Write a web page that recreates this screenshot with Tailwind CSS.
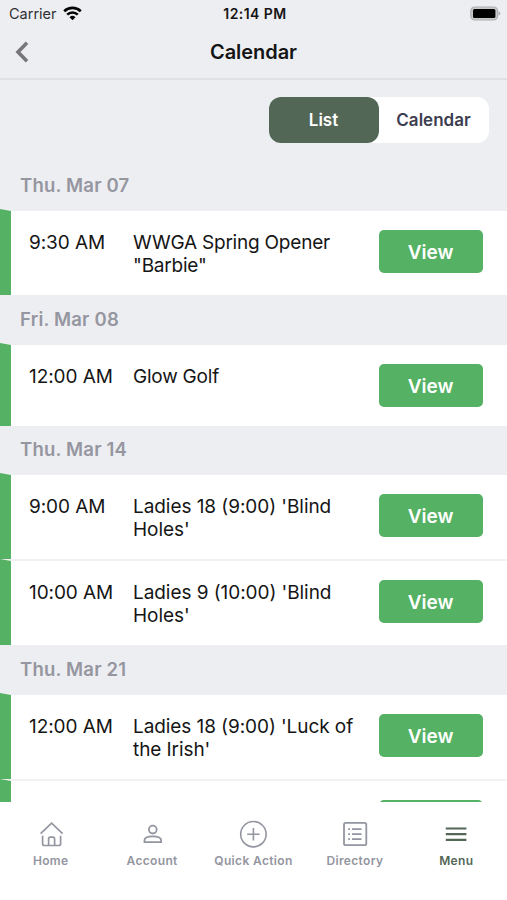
<!DOCTYPE html>
<html lang="en">
<head>
<meta charset="utf-8">
<title>Calendar</title>
<script src="https://cdn.jsdelivr.net/npm/@tailwindcss/browser@4"></script>
</head>
<body class="w-[507px] h-[900px] overflow-hidden bg-white text-[#151515] font-['Inter','Liberation_Sans',sans-serif]">
<div class="flex flex-col h-[900px]">
  <header class="h-20 shrink-0 bg-[#edeef2] border-b-2 border-[#e0e1e4]">
    <div class="grid grid-cols-3 h-7 items-center pl-[9px] pr-[6px]">
      <div class="flex items-center gap-[6px]"><span class="text-[14.5px] leading-7 text-[#303032]">Carrier</span>
        <svg class="w-[19px] h-[15px] -mt-[2px]" viewBox="0 0 19 15" fill="none" stroke="#050505" stroke-width="2.6"><path d="M1.2 5.2a12 12 0 0 1 16.6 0M4.2 8.7a7.5 7.5 0 0 1 10.6 0"/><path d="M9.5 14.2 6.5 11.2a4.4 4.4 0 0 1 6 0Z" fill="#050505" stroke="none"/></svg></div>
      <span class="text-center text-[14px] leading-7 font-semibold whitespace-nowrap tracking-[0.45px]">12:14 PM</span>
      <svg class="w-[31px] h-[15px] -mt-[2px] justify-self-end" viewBox="0 0 31 15"><rect x=".8" y="1" width="26.8" height="13" rx="4" fill="#c9c9cb" stroke="#b0b0b2" stroke-width="1.2"/><rect x="3" y="3" width="22.4" height="9" rx="1.5" fill="#000"/><path d="M28.6 5.3q3.4 2.2 0 4.4Z" fill="#aaaaac"/></svg>
    </div>
    <div class="grid grid-cols-3 h-[48px] items-center">
      <svg class="ml-[15px] w-[14px] h-[22px]" viewBox="0 0 14 22" fill="none" stroke="#77777a" stroke-width="3.6"><path d="M12 1.8 3 11l9 9.2"/></svg>
      <h1 class="text-center text-[20px] font-semibold leading-6 tracking-[-0.05px]">Calendar</h1>
    </div>
  </header>

  <main class="h-[722px] shrink-0 overflow-hidden bg-[#edeef2]">
    <div class="flex justify-end pt-[17px] pr-[18.5px]">
      <div class="flex h-[46px] w-[220px] rounded-[12px] bg-white text-[17px] font-semibold">
        <button class="w-[110px] rounded-[12px] bg-[#536757] pt-[2px] text-white">List</button>
        <button class="w-[110px] pt-[2px] text-[#3d3d50]">Calendar</button>
      </div>
    </div>

    <h2 class="h-[66px] pt-[30px] pl-5 text-[18.5px] leading-6 font-semibold tracking-[0.2px] text-[#9596a0]">Thu. Mar 07</h2>
    <article class="flex h-[86px] border-t-2 border-t-[#edeef2] border-l-[11px] border-l-[#55b163] bg-white pl-[18px] pt-[19px] text-[19px] leading-[23px]">
      <time class="w-[104px] shrink-0 whitespace-nowrap pt-px tracking-[-0.08px]">9:30 AM</time>
      <p class="w-[245.5px] shrink-0 whitespace-nowrap pt-px tracking-[-0.22px]">WWGA Spring Opener<br>"Barbie"</p>
      <button class="h-[43px] w-[104px] shrink-0 rounded-[5px] bg-[#55b163] pt-px text-[19px] font-semibold text-white">View</button>
    </article>

    <h2 class="h-[48px] pt-3 pl-5 text-[18.5px] leading-6 font-semibold tracking-[0.2px] text-[#9596a0]">Fri. Mar 08</h2>
    <article class="flex h-[83px] border-t-2 border-t-[#edeef2] border-l-[11px] border-l-[#55b163] bg-white pl-[18px] pt-[19px] text-[19px] leading-[23px]">
      <time class="w-[104px] shrink-0 whitespace-nowrap pt-px tracking-[-0.08px]">12:00 AM</time>
      <p class="w-[245.5px] shrink-0 whitespace-nowrap pt-px tracking-[-0.22px]">Glow Golf</p>
      <button class="h-[43px] w-[104px] shrink-0 rounded-[5px] bg-[#55b163] pt-px text-[19px] font-semibold text-white">View</button>
    </article>

    <h2 class="h-[47px] pt-[11px] pl-5 text-[18.5px] leading-6 font-semibold tracking-[0.2px] text-[#9596a0]">Thu. Mar 14</h2>
    <article class="flex h-[86px] border-t-2 border-t-[#edeef2] border-l-[11px] border-l-[#55b163] bg-white pl-[18px] pt-[19px] text-[19px] leading-[23px]">
      <time class="w-[104px] shrink-0 whitespace-nowrap pt-px tracking-[-0.08px]">9:00 AM</time>
      <p class="w-[245.5px] shrink-0 whitespace-nowrap pt-px tracking-[-0.06px]">Ladies 18 (9:00) 'Blind<br>Holes'</p>
      <button class="h-[43px] w-[104px] shrink-0 rounded-[5px] bg-[#55b163] pt-px text-[19px] font-semibold text-white">View</button>
    </article>
    <article class="flex h-[86px] border-t-2 border-t-[#f2f2f3] border-l-[11px] border-l-[#55b163] bg-white pl-[18px] pt-[19px] text-[19px] leading-[23px]">
      <time class="w-[104px] shrink-0 whitespace-nowrap pt-px tracking-[-0.08px]">10:00 AM</time>
      <p class="w-[245.5px] shrink-0 whitespace-nowrap pt-px tracking-[-0.06px]">Ladies 9 (10:00) 'Blind<br>Holes'</p>
      <button class="h-[43px] w-[104px] shrink-0 rounded-[5px] bg-[#55b163] pt-px text-[19px] font-semibold text-white">View</button>
    </article>

    <h2 class="h-[48px] pt-3 pl-5 text-[18.5px] leading-6 font-semibold tracking-[0.2px] text-[#9596a0]">Thu. Mar 21</h2>
    <article class="flex h-[86px] border-t-2 border-t-[#edeef2] border-l-[11px] border-l-[#55b163] bg-white pl-[18px] pt-[19px] text-[19px] leading-[23px]">
      <time class="w-[104px] shrink-0 whitespace-nowrap pt-px tracking-[-0.08px]">12:00 AM</time>
      <p class="w-[245.5px] shrink-0 whitespace-nowrap pt-px tracking-[-0.08px]">Ladies 18 (9:00) 'Luck of<br>the Irish'</p>
      <button class="h-[43px] w-[104px] shrink-0 rounded-[5px] bg-[#55b163] pt-px text-[19px] font-semibold text-white">View</button>
    </article>
    <article class="flex h-[86px] border-t-2 border-t-[#f2f2f3] border-l-[11px] border-l-[#55b163] bg-white pl-[367.5px] pt-[19px]">
      <div class="h-[43px] w-[104px] shrink-0 rounded-[5px] bg-[#55b163]"></div>
    </article>
  </main>

  <nav class="grid grid-cols-5 h-[98px] bg-white pt-[18px] text-[12px] leading-4 font-semibold tracking-[0.35px] text-[#9395a0]">
    <a class="flex flex-col items-center gap-[5px]">
      <svg class="w-7 h-7" viewBox="0 0 28 28" fill="none" stroke="currentColor" stroke-width="1.7"><path d="M3.6 13.6 14.6 3.2l11 10.4M5.6 15.8v7.9q0 1.8 1.8 1.8h14.4q1.8 0 1.8-1.8v-7.9M11.6 25.5v-6.6q0-1.8 1.8-1.8h2.4q1.8 0 1.8 1.8v6.6"/></svg>
      <span>Home</span></a>
    <a class="flex flex-col items-center gap-[5px]">
      <svg class="w-7 h-7" viewBox="0 0 28 28" fill="none" stroke="currentColor" stroke-width="1.8"><circle cx="14.8" cy="9.6" r="3.9"/><path d="M6.5 22.1v-2c0-2.7 4.3-3.8 8.3-3.8s8.3 1.1 8.3 3.8v2Z"/></svg>
      <span>Account</span></a>
    <a class="flex flex-col items-center gap-[5px] whitespace-nowrap">
      <svg class="w-7 h-7" viewBox="0 0 28 28" fill="none" stroke="currentColor" stroke-width="1.6"><circle cx="14.4" cy="14.2" r="12.7"/><path d="M14.4 8v12.4M8.2 14.2h12.4"/></svg>
      <span>Quick Action</span></a>
    <a class="flex flex-col items-center gap-[5px]">
      <svg class="w-7 h-7" viewBox="0 0 28 28" fill="none" stroke="currentColor" stroke-width="1.8"><rect x="3" y="2.9" width="22.3" height="22.3" rx="1.8"/><path d="M11 9.2h9.5M11 14.2h9.5M11 19.2h9.5M7.2 9.2H9M7.2 14.2H9M7.2 19.2H9"/></svg>
      <span>Directory</span></a>
    <a class="flex flex-col items-center gap-[5px] text-[#536757]">
      <svg class="w-7 h-7" viewBox="0 0 28 28" fill="none" stroke="currentColor" stroke-width="2.2"><path d="M3.8 8.5h20.6M3.8 14.2h20.6M3.8 19.9h20.6"/></svg>
      <span>Menu</span></a>
  </nav>
</div>
</body>
</html>
